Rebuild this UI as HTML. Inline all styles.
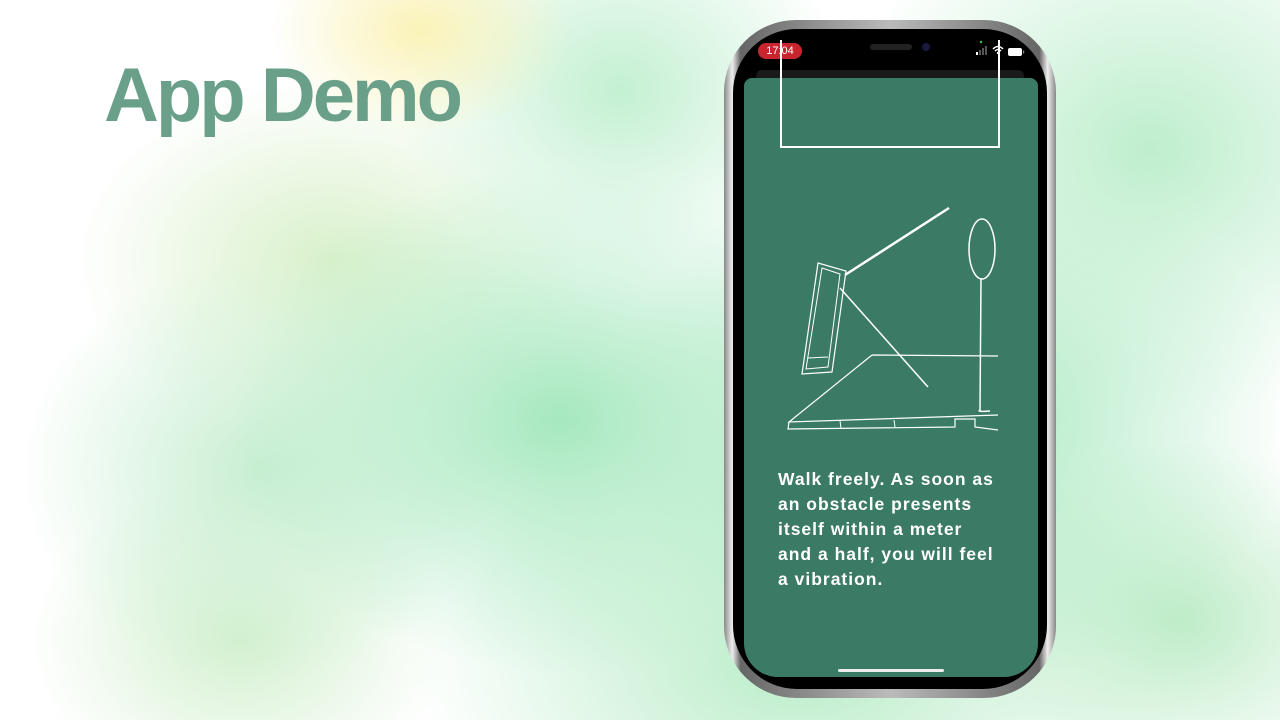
<!DOCTYPE html>
<html><head><meta charset="utf-8"><style>
html,body{margin:0;padding:0}
body{width:1280px;height:720px;overflow:hidden;position:relative;background:#fff;font-family:"Liberation Sans",sans-serif}
.bg{position:absolute;inset:0;background:
radial-gradient(ellipse 200px 140px at 420px 30px,rgba(250,242,180,.95),transparent 75%),
radial-gradient(ellipse 300px 260px at 620px 90px,rgba(195,240,210,1),transparent 75%),
radial-gradient(ellipse 420px 360px at 1150px 150px,rgba(190,238,205,1),transparent 75%),
radial-gradient(ellipse 460px 360px at 950px 420px,rgba(165,232,190,1),transparent 75%),
radial-gradient(ellipse 440px 340px at 560px 420px,rgba(165,232,190,1),transparent 75%),
radial-gradient(ellipse 320px 280px at 260px 470px,rgba(200,238,210,1),transparent 75%),
radial-gradient(ellipse 340px 240px at 330px 260px,rgba(215,240,200,.95),transparent 75%),
radial-gradient(ellipse 280px 220px at 240px 640px,rgba(210,240,205,.95),transparent 75%),
radial-gradient(ellipse 300px 240px at 1180px 620px,rgba(190,236,200,1),transparent 75%),
radial-gradient(ellipse 520px 320px at 800px 660px,rgba(185,236,200,1),transparent 75%);}
h1{position:absolute;left:104px;top:52px;margin:0;font-size:76px;font-weight:bold;color:#6aa08a;letter-spacing:-3px}
.frame{position:absolute;left:724px;top:20px;width:332px;height:678px;border-radius:72px;background:linear-gradient(90deg,#888,#eee 2.5%,#666 5%,#bbb 50%,#666 95%,#eee 97.5%,#888);}
.inner{position:absolute;left:733px;top:29px;width:314px;height:660px;border-radius:64px;background:#000}
.screen{position:absolute;left:744px;top:78px;width:294px;height:599px;border-radius:8px 8px 34px 34px;background:#3b7a65}
.pill{position:absolute;left:758px;top:43px;width:44px;height:16px;border-radius:8px;background:#c8252f;color:#fff;font-size:11px;text-align:center;line-height:16px}
.txt{position:absolute;left:778px;top:467px;width:250px;white-space:nowrap;color:#fff;font-weight:bold;font-size:17.5px;line-height:25px;letter-spacing:1px}
.home{position:absolute;left:838px;top:669px;width:106px;height:3px;border-radius:2px;background:#eee}
</style></head><body>
<div class="bg"></div>
<h1>App Demo</h1>
<div class="frame"></div>
<div class="inner"></div>
<div style="position:absolute;left:756px;top:70px;width:268px;height:10px;border-radius:6px 6px 0 0;background:#1a1a1a"></div>
<div class="screen"></div>
<div style="position:absolute;left:870px;top:44px;width:42px;height:6px;border-radius:3px;background:#222"></div>
<div style="position:absolute;left:922px;top:43px;width:8px;height:8px;border-radius:4px;background:#1a1a40"></div>
<div class="pill">17:04</div>
<svg style="position:absolute;left:970px;top:40px" width="60" height="20">
<rect x="6" y="12" width="2" height="3" fill="#fff"/><rect x="9" y="10" width="2" height="5" fill="#555"/><rect x="12" y="8" width="2" height="7" fill="#555"/><rect x="15" y="6" width="2" height="9" fill="#555"/>
<path d="M23 9 q5 -5 10 0 M25 11 q3 -3 6 0" stroke="#fff" stroke-width="1.5" fill="none"/><circle cx="28" cy="13" r="1.2" fill="#fff"/>
<rect x="38" y="8" width="14" height="8" rx="2" fill="#fff"/><rect x="53" y="10.5" width="1.2" height="3" fill="#888"/>
<circle cx="11" cy="2" r="1.2" fill="#3c3"/>
</svg>
<svg style="position:absolute;left:0;top:0" width="1280" height="720" fill="none" stroke="#fff">
<path d="M781 40 V147 H999 V40" stroke-width="2"/>
<path d="M845 275 L949 208" stroke-width="2.5"/>
<path d="M840 288 L928 387" stroke-width="1.5"/>
<path d="M818 263 L846 271 L832 372 L802 374 Z" stroke-width="1.2"/>
<path d="M822 268 L840 274 L828 367 L806 369 Z" stroke-width="1"/>
<path d="M808 358 L828 357" stroke-width="1"/>
<ellipse cx="982" cy="249" rx="13" ry="30" stroke-width="1.5"/>
<path d="M981 278 L980 410 Q976 412 990 411" stroke-width="1.5"/>
<path d="M872 355 L998 356 M872 355 L789 422 L998 415 M789 422 L788 429 L955 427 L955 419 L975 419 L975 427 L998 430" stroke-width="1.2"/>
<path d="M840 421 L841 428 M894 420 L895 427" stroke-width="1"/>
</svg>
<div class="txt">Walk freely. As soon as<br>an obstacle presents<br>itself within a meter<br>and a half, you will feel<br>a vibration.</div>
<div class="home"></div>
</body></html>
